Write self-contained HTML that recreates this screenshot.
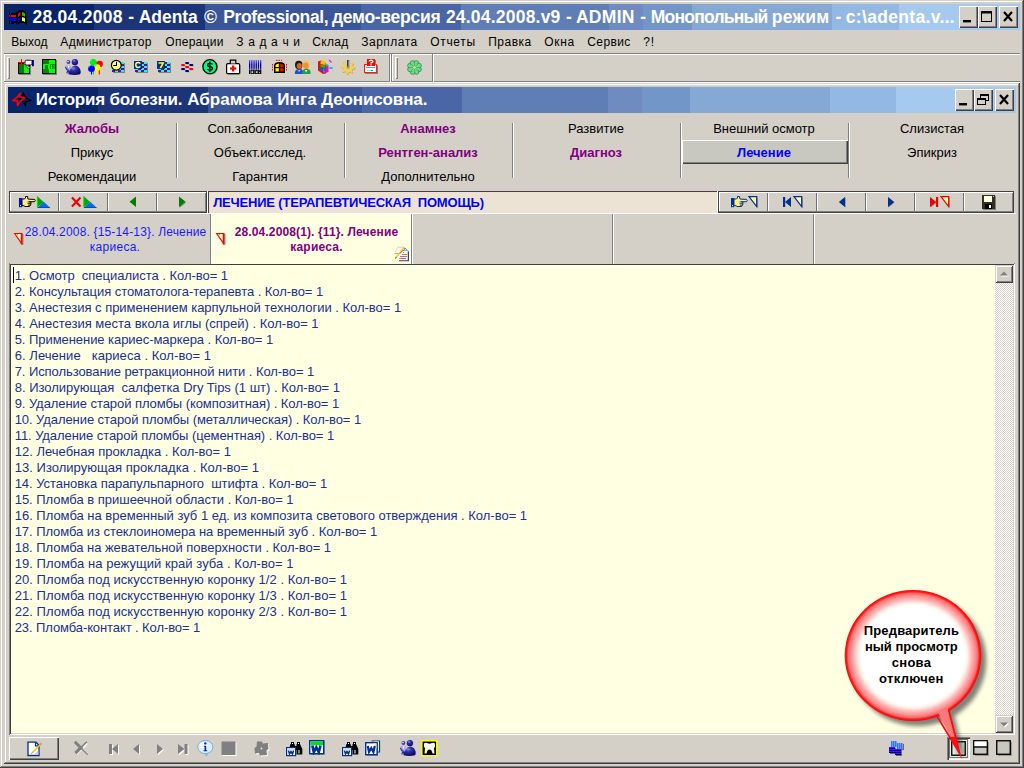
<!DOCTYPE html>
  <html><head><meta charset="utf-8"><title>Adenta</title>
  <style>
  html,body{margin:0;padding:0;}
  body{width:1024px;height:768px;overflow:hidden;background:#d4d0c8;position:relative;font-family:"Liberation Sans",sans-serif;}
  div,svg{position:absolute;}
  div{box-sizing:border-box;}
  </style></head><body>
  <div style="left:0px;top:0px;width:1024px;height:1px;background:#d4d0c8;"></div>
<div style="left:1px;top:1px;width:1022px;height:1px;background:#fff;"></div>
<div style="left:1px;top:1px;width:1px;height:766px;background:#fff;"></div>
<div style="left:1023px;top:0px;width:1px;height:768px;background:#404040;"></div>
<div style="left:0px;top:767px;width:1024px;height:1px;background:#404040;"></div>
<div style="left:1022px;top:1px;width:1px;height:766px;background:#808080;"></div>
<div style="left:1px;top:766px;width:1022px;height:1px;background:#808080;"></div>
<div style="left:4px;top:4px;width:1016px;height:26px;background:linear-gradient(to right,#0a246a 0.00%, #0a246a 8.90%,#1c3478 8.90%, #1c3478 19.80%,#3a5598 19.80%, #3a5598 35.10%,#4a66a6 35.10%, #4a66a6 45.00%,#607eb6 45.00%, #607eb6 59.50%,#6f8bc0 59.50%, #6f8bc0 62.90%,#7296c8 62.90%, #7296c8 67.70%,#86a8d4 67.70%, #86a8d4 81.50%,#94b8e4 81.50%, #94b8e4 88.10%,#a6c9f0 88.10%, #a6c9f0 100.00%);"></div>
<svg style="left:7px;top:9px" width="22" height="18" viewBox="0 0 22 18"><g shape-rendering="crispEdges">
<rect x="2" y="3" width="1" height="12" fill="#000"/>
<rect x="4" y="4" width="6" height="2" fill="#000"/><rect x="2" y="6" width="1" height="2" fill="#f00"/><rect x="4" y="6" width="5" height="2" fill="#f00"/>
<rect x="2" y="9" width="1" height="2" fill="#00f"/><rect x="4" y="9" width="5" height="3" fill="#00f"/><rect x="4" y="12" width="6" height="2" fill="#000"/>
<rect x="4" y="8" width="5" height="1" fill="#000"/><rect x="4" y="14" width="3" height="1" fill="#000"/></g>
<path d="M9 4 Q11 1 14 1 Q17 1 19 3 L20 15 L20 16 Q17 13 15 13.5 Q12 14 10 16 Z" fill="#000"/>
<path d="M11 5 Q12 3 13.5 3 L13.5 6.5 Q12 7 11 8 Z" fill="#f00"/>
<path d="M15 3 Q17 3 18 4.5 L18 8 Q17 6.8 15 6.8 Z" fill="#0c0"/>
<path d="M11 9.5 Q12 8.5 13.5 8.2 L13.5 11.5 Q12 12 11 13 Z" fill="#00f"/>
<path d="M15 8.2 Q17 8.2 18 9.5 L18 13 Q17 12 15 12 Z" fill="#ff0"/>
</svg>
<div style="left:32.42px;top:6px;font-size:17.5px;color:#fff;line-height:20.5px;white-space:pre;font-weight:bold;letter-spacing:0.281px;line-height:22px;">28.04.2008</div>
<div style="left:128.21px;top:6px;font-size:17.5px;color:#fff;line-height:20.5px;white-space:pre;font-weight:bold;line-height:22px;">-</div>
<div style="left:138.67px;top:6px;font-size:17.5px;color:#fff;line-height:20.5px;white-space:pre;font-weight:bold;letter-spacing:-0.026px;line-height:22px;">Adenta</div>
<div style="left:204.05px;top:6px;font-size:17.5px;color:#fff;line-height:20.5px;white-space:pre;font-weight:bold;line-height:22px;">©</div>
<div style="left:223.17px;top:6px;font-size:17.5px;color:#fff;line-height:20.5px;white-space:pre;font-weight:bold;letter-spacing:-0.366px;line-height:22px;">Professional,</div>
<div style="left:331.92px;top:6px;font-size:17.5px;color:#fff;line-height:20.5px;white-space:pre;font-weight:bold;letter-spacing:-0.281px;line-height:22px;">демо-версия</div>
<div style="left:445.92px;top:6px;font-size:17.5px;color:#fff;line-height:20.5px;white-space:pre;font-weight:bold;letter-spacing:0.21px;line-height:22px;">24.04.2008.v9</div>
<div style="left:565.96px;top:6px;font-size:17.5px;color:#fff;line-height:20.5px;white-space:pre;font-weight:bold;line-height:22px;">-</div>
<div style="left:575.92px;top:6px;font-size:17.5px;color:#fff;line-height:20.5px;white-space:pre;font-weight:bold;letter-spacing:0.309px;line-height:22px;">ADMIN</div>
<div style="left:640.21px;top:6px;font-size:17.5px;color:#fff;line-height:20.5px;white-space:pre;font-weight:bold;line-height:22px;">-</div>
<div style="left:650.82px;top:6px;font-size:17.5px;color:#fff;line-height:20.5px;white-space:pre;font-weight:bold;letter-spacing:-0.795px;line-height:22px;">Монопольный</div>
<div style="left:771.72px;top:6px;font-size:17.5px;color:#fff;line-height:20.5px;white-space:pre;font-weight:bold;letter-spacing:0.288px;line-height:22px;">режим</div>
<div style="left:835.49px;top:6px;font-size:17.5px;color:#fff;line-height:20.5px;white-space:pre;font-weight:bold;line-height:22px;">-</div>
<div style="left:845.82px;top:6px;font-size:17.5px;color:#fff;line-height:20.5px;white-space:pre;font-weight:bold;letter-spacing:0.324px;line-height:22px;">c:\adenta.v...</div>
<div style="left:959px;top:6px;width:19px;height:22px;background:#d4d0c8;box-shadow:inset 1px 1px 0 #fff, inset -1px -1px 0 #404040, inset -2px -2px 0 #808080;"><svg style="left:0;top:0" width="19" height="22" viewBox="0 0 19 22"><rect x="4" y="14" width="8" height="2.4" fill="#000"/></svg></div>
<div style="left:978px;top:6px;width:19px;height:22px;background:#d4d0c8;box-shadow:inset 1px 1px 0 #fff, inset -1px -1px 0 #404040, inset -2px -2px 0 #808080;"><svg style="left:0;top:0" width="19" height="22" viewBox="0 0 19 22"><rect x="3.5" y="5.5" width="10" height="10" fill="none" stroke="#000"/><rect x="3" y="5" width="11" height="2.5" fill="#000"/></svg></div>
<div style="left:999px;top:6px;width:19px;height:22px;background:#d4d0c8;box-shadow:inset 1px 1px 0 #fff, inset -1px -1px 0 #404040, inset -2px -2px 0 #808080;"><svg style="left:0;top:0" width="19" height="22" viewBox="0 0 19 22"><path d="M5 6 L13 15 M13 6 L5 15" stroke="#000" stroke-width="2.2" fill="none"/></svg></div>
<div style="left:11.26px;top:34px;font-size:12px;color:#000;line-height:15px;white-space:pre;letter-spacing:0.114px;line-height:16px;">Выход</div>
<div style="left:60.26px;top:34px;font-size:12px;color:#000;line-height:15px;white-space:pre;letter-spacing:0.377px;line-height:16px;">Администратор</div>
<div style="left:165.26px;top:34px;font-size:12px;color:#000;line-height:15px;white-space:pre;letter-spacing:0.292px;line-height:16px;">Операции</div>
<div style="left:236.26px;top:34px;font-size:12px;color:#000;line-height:15px;white-space:pre;letter-spacing:0.658px;line-height:16px;">З а д а ч и</div>
<div style="left:312.26px;top:34px;font-size:12px;color:#000;line-height:15px;white-space:pre;letter-spacing:0.349px;line-height:16px;">Склад</div>
<div style="left:361.26px;top:34px;font-size:12px;color:#000;line-height:15px;white-space:pre;letter-spacing:0.491px;line-height:16px;">Зарплата</div>
<div style="left:430.26px;top:34px;font-size:12px;color:#000;line-height:15px;white-space:pre;letter-spacing:0.665px;line-height:16px;">Отчеты</div>
<div style="left:488.26px;top:34px;font-size:12px;color:#000;line-height:15px;white-space:pre;letter-spacing:0.488px;line-height:16px;">Правка</div>
<div style="left:544.26px;top:34px;font-size:12px;color:#000;line-height:15px;white-space:pre;letter-spacing:0.647px;line-height:16px;">Окна</div>
<div style="left:587.26px;top:34px;font-size:12px;color:#000;line-height:15px;white-space:pre;letter-spacing:0.397px;line-height:16px;">Сервис</div>
<div style="left:643.26px;top:34px;font-size:12px;color:#000;line-height:15px;white-space:pre;letter-spacing:0.731px;line-height:16px;">?!</div>
<div style="left:4px;top:53px;width:1016px;height:1px;background:#808080;"></div>
<div style="left:4px;top:54px;width:1016px;height:1px;background:#fff;"></div>
<div style="left:4px;top:81px;width:1016px;height:1px;background:#808080;"></div>
<div style="left:4px;top:82px;width:1016px;height:1px;background:#fff;"></div>
<div style="left:4px;top:54px;width:1px;height:27px;background:#fff;"></div>
<div style="left:389px;top:54px;width:1px;height:27px;background:#808080;"></div>
<div style="left:390px;top:54px;width:1px;height:28px;background:#fff;"></div>
<div style="left:391px;top:54px;width:1px;height:27px;background:#808080;"></div>
<div style="left:392px;top:55px;width:1px;height:26px;background:#fff;"></div>
<div style="left:432px;top:54px;width:1px;height:27px;background:#808080;"></div>
<div style="left:433px;top:54px;width:1px;height:28px;background:#fff;"></div>
<div style="left:7px;top:57px;width:3px;height:22px;background:#d4d0c8;box-shadow:inset 1px 1px 0 #fff, inset -1px -1px 0 #808080;"></div>
<div style="left:395px;top:57px;width:3px;height:22px;background:#d4d0c8;box-shadow:inset 1px 1px 0 #fff, inset -1px -1px 0 #808080;"></div>
<svg style="left:18px;top:59px" width="17" height="16" viewBox="0 0 17 16"><g shape-rendering="crispEdges"><rect x="1" y="5" width="12" height="11" fill="#808080"/><rect x="0" y="4" width="12" height="11" fill="#000"/><rect x="1" y="5" width="5" height="9" fill="#008000"/><rect x="6" y="5" width="5" height="9" fill="#00ff00"/></g>
<path d="M5.6 4.6 L7.6 3 L12 8.2 L10.4 10 Z" fill="#fff" stroke="#000" stroke-width="0.5"/><path d="M6.6 4.6 L10.6 9.2 M7.6 3.8 L11.4 8.4 M6.4 5.6 L8.4 3.6 M7.8 7 L9.8 5 M9.2 8.6 L11.2 6.6" stroke="#404040" stroke-width="0.6"/>
<rect x="7" y="1.2" width="7" height="4.8" rx="1.6" fill="#fff" stroke="#000" stroke-width="0.9"/>
<rect x="14" y="1" width="1.9" height="6.2" fill="#000080"/>
<g shape-rendering="crispEdges"><rect x="3" y="0" width="1" height="7" fill="#f00"/><rect x="0" y="3" width="7" height="1" fill="#f00"/></g></svg>
<svg style="left:41px;top:59px" width="16" height="16" viewBox="0 0 16 16"><g shape-rendering="crispEdges"><rect x="2" y="1" width="14" height="15" fill="#808080"/><rect x="1" y="0" width="14" height="15" fill="#000"/><rect x="2" y="1" width="12" height="13" fill="#008000"/>
<rect x="8" y="1" width="6" height="4" fill="#00ff00"/><rect x="8" y="10" width="6" height="4" fill="#00ff00"/><rect x="2" y="10" width="6" height="4" fill="#009000"/>
<rect x="2" y="5" width="7" height="5" fill="#00ff00"/><rect x="4" y="6" width="3" height="4" fill="#008000"/>
<rect x="9" y="5" width="5" height="1" fill="#00a000"/><rect x="10" y="6" width="1" height="4" fill="#00ff00"/><rect x="12" y="6" width="2" height="4" fill="#00c000"/></g></svg>
<svg style="left:64px;top:59px" width="17" height="16" viewBox="0 0 17 16"><defs><radialGradient id="pga" cx="0.38" cy="0.3" r="0.75"><stop offset="0" stop-color="#8c8ce6"/><stop offset="0.35" stop-color="#3030a8"/><stop offset="1" stop-color="#06065c"/></radialGradient></defs>
<path d="M1 8 Q1.5 5.6 4.4 5.6 Q6.6 5.6 7.4 8 L6.6 11.5 L5.6 14.4 L3 14.4 L2.6 11 Z" fill="#a8a8ec"/><path d="M3.6 6.6 L4.6 9.6 L5.6 6.6 Z" fill="#fff"/><path d="M1.4 8 L3 11 M2.8 14.4 L4 11 L5.4 14.4" stroke="#2828a0" stroke-width="1.1" fill="none"/>
<circle cx="4.4" cy="3" r="1.9" fill="#3434b0"/><circle cx="4" cy="2.6" r="0.8" fill="#fff"/>
<circle cx="10.9" cy="3.1" r="3.2" fill="url(#pga)"/><path d="M4.6 15.2 Q4.4 12 7 9.6 Q8.4 6.5 11 6.5 Q14.4 6.5 16 10 Q17.4 13.2 16 15.2 Q10.5 16.6 4.6 15.2 Z" fill="url(#pga)"/></svg>
<svg style="left:87px;top:59px" width="16" height="16" viewBox="0 0 16 16"><path d="M6.3 6 L6.3 15.5" stroke="#00e000" stroke-width="1.1"/><path d="M4.5 12.5 L4.5 15.5" stroke="#0000ff" stroke-width="1.1"/><path d="M10 11.5 L10 15.5" stroke="#ffff00" stroke-width="1.1"/><path d="M12.3 8 L12.3 15.5" stroke="#ff0000" stroke-width="1.1"/>
<ellipse cx="6.3" cy="3.3" rx="3.4" ry="3.4" fill="#00f400"/><ellipse cx="12.6" cy="5" rx="3.3" ry="3.2" fill="#ff0000"/><ellipse cx="10.4" cy="8.6" rx="3" ry="3.4" fill="#ffff00"/><ellipse cx="4.5" cy="9.8" rx="3.4" ry="3.2" fill="#0000ff"/><circle cx="8.4" cy="6.4" r="1.1" fill="#00ffff"/><circle cx="3.8" cy="1.6" r="0.8" fill="#00ffff"/><path d="M1.6 8.6 L3 7.4" stroke="#80c0ff" stroke-width="0.8"/></svg>
<svg style="left:110px;top:59px" width="16" height="16" viewBox="0 0 16 16"><g shape-rendering="crispEdges"><rect x="2" y="3" width="3" height="2" fill="#800080"/><rect x="5" y="3" width="3" height="2" fill="#00ffff"/><rect x="8" y="3" width="3" height="2" fill="#800080"/><rect x="11" y="3" width="3" height="2" fill="#00ffff"/><rect x="2" y="5" width="3" height="2" fill="#00ffff"/><rect x="5" y="5" width="3" height="2" fill="#800080"/><rect x="8" y="5" width="3" height="2" fill="#00ffff"/><rect x="11" y="5" width="3" height="2" fill="#800080"/><rect x="2" y="7" width="3" height="2" fill="#800080"/><rect x="5" y="7" width="3" height="2" fill="#00ffff"/><rect x="8" y="7" width="3" height="2" fill="#800080"/><rect x="11" y="7" width="3" height="2" fill="#00ffff"/><rect x="2" y="9" width="3" height="2" fill="#00ffff"/><rect x="5" y="9" width="3" height="2" fill="#800080"/><rect x="8" y="9" width="3" height="2" fill="#00ffff"/><rect x="11" y="9" width="3" height="2" fill="#800080"/><rect x="2" y="11" width="3" height="2" fill="#800080"/><rect x="5" y="11" width="3" height="2" fill="#00ffff"/><rect x="8" y="11" width="3" height="2" fill="#800080"/><rect x="11" y="11" width="3" height="2" fill="#00ffff"/></g><rect x="14" y="4" width="1" height="10" fill="#808080"/><rect x="3" y="13" width="12" height="1" fill="#808080"/><circle cx="6.3" cy="6.2" r="4.9" fill="#ffff80" stroke="#000" stroke-width="1.2"/><path d="M6.5 2.8 L6.5 6.5 L3.3 6.5" stroke="#000" stroke-width="1.1" fill="none"/></svg>
<svg style="left:133px;top:59px" width="16" height="16" viewBox="0 0 16 16"><g shape-rendering="crispEdges"><rect x="2" y="3" width="3" height="2" fill="#800080"/><rect x="5" y="3" width="3" height="2" fill="#00ffff"/><rect x="8" y="3" width="3" height="2" fill="#800080"/><rect x="11" y="3" width="3" height="2" fill="#00ffff"/><rect x="2" y="5" width="3" height="2" fill="#00ffff"/><rect x="5" y="5" width="3" height="2" fill="#800080"/><rect x="8" y="5" width="3" height="2" fill="#00ffff"/><rect x="11" y="5" width="3" height="2" fill="#800080"/><rect x="2" y="7" width="3" height="2" fill="#800080"/><rect x="5" y="7" width="3" height="2" fill="#00ffff"/><rect x="8" y="7" width="3" height="2" fill="#800080"/><rect x="11" y="7" width="3" height="2" fill="#00ffff"/><rect x="2" y="9" width="3" height="2" fill="#00ffff"/><rect x="5" y="9" width="3" height="2" fill="#800080"/><rect x="8" y="9" width="3" height="2" fill="#00ffff"/><rect x="11" y="9" width="3" height="2" fill="#800080"/><rect x="2" y="11" width="3" height="2" fill="#800080"/><rect x="5" y="11" width="3" height="2" fill="#00ffff"/><rect x="8" y="11" width="3" height="2" fill="#800080"/><rect x="11" y="11" width="3" height="2" fill="#00ffff"/></g><rect x="14" y="4" width="1" height="10" fill="#808080"/><rect x="3" y="13" width="12" height="1" fill="#808080"/><rect x="1" y="2" width="8" height="8" fill="#003090" shape-rendering="crispEdges"/><path d="M7.3 4.6 Q6.5 3.6 5 3.6 Q2.8 3.6 2.8 6 Q2.8 8.4 5 8.4 Q6.5 8.4 7.3 7.4" fill="none" stroke="#ffff60" stroke-width="1.5"/></svg>
<svg style="left:156px;top:59px" width="16" height="16" viewBox="0 0 16 16"><g shape-rendering="crispEdges"><rect x="2" y="3" width="3" height="2" fill="#800080"/><rect x="5" y="3" width="3" height="2" fill="#00ffff"/><rect x="8" y="3" width="3" height="2" fill="#800080"/><rect x="11" y="3" width="3" height="2" fill="#00ffff"/><rect x="2" y="5" width="3" height="2" fill="#00ffff"/><rect x="5" y="5" width="3" height="2" fill="#800080"/><rect x="8" y="5" width="3" height="2" fill="#00ffff"/><rect x="11" y="5" width="3" height="2" fill="#800080"/><rect x="2" y="7" width="3" height="2" fill="#800080"/><rect x="5" y="7" width="3" height="2" fill="#00ffff"/><rect x="8" y="7" width="3" height="2" fill="#800080"/><rect x="11" y="7" width="3" height="2" fill="#00ffff"/><rect x="2" y="9" width="3" height="2" fill="#00ffff"/><rect x="5" y="9" width="3" height="2" fill="#800080"/><rect x="8" y="9" width="3" height="2" fill="#00ffff"/><rect x="11" y="9" width="3" height="2" fill="#800080"/><rect x="2" y="11" width="3" height="2" fill="#800080"/><rect x="5" y="11" width="3" height="2" fill="#00ffff"/><rect x="8" y="11" width="3" height="2" fill="#800080"/><rect x="11" y="11" width="3" height="2" fill="#00ffff"/></g><rect x="14" y="4" width="1" height="10" fill="#808080"/><rect x="3" y="13" width="12" height="1" fill="#808080"/><rect x="1" y="2" width="8" height="8" fill="#003090" shape-rendering="crispEdges"/><path d="M2.5 4 L7.2 4 L4.5 9" fill="none" stroke="#ffff00" stroke-width="1.6"/></svg>
<svg style="left:179px;top:59px" width="16" height="16" viewBox="0 0 16 16"><rect x="6.8999999999999995" y="4.3" width="3.6" height="1" fill="#808080" opacity="0.7"/><rect x="6.3" y="3" width="3.7" height="1.9" rx="0.4" fill="#000080"/><rect x="2.8000000000000003" y="6.3" width="3.6" height="1" fill="#808080" opacity="0.7"/><rect x="2.2" y="5" width="3.7" height="1.9" rx="0.4" fill="#ff0000"/><rect x="11.0" y="6.3" width="3.6" height="1" fill="#808080" opacity="0.7"/><rect x="10.4" y="5" width="3.7" height="1.9" rx="0.4" fill="#000080"/><rect x="6.8999999999999995" y="8.3" width="3.6" height="1" fill="#808080" opacity="0.7"/><rect x="6.3" y="7" width="3.7" height="1.9" rx="0.4" fill="#ff0000"/><rect x="2.8000000000000003" y="10.3" width="3.6" height="1" fill="#808080" opacity="0.7"/><rect x="2.2" y="9" width="3.7" height="1.9" rx="0.4" fill="#000080"/><rect x="11.0" y="10.3" width="3.6" height="1" fill="#808080" opacity="0.7"/><rect x="10.4" y="9" width="3.7" height="1.9" rx="0.4" fill="#ff0000"/><rect x="6.8999999999999995" y="12.3" width="3.6" height="1" fill="#808080" opacity="0.7"/><rect x="6.3" y="11" width="3.7" height="1.9" rx="0.4" fill="#000080"/></svg>
<svg style="left:202px;top:59px" width="17" height="17" viewBox="0 0 17 17"><circle cx="8.5" cy="8.5" r="7.3" fill="#808080"/><circle cx="7.9" cy="7.7" r="7" fill="#00ff80" stroke="#000" stroke-width="1.3"/>
<path d="M10.5 5.5 Q10 4.3 8 4.3 Q5.6 4.3 5.6 6 Q5.6 7.6 8 7.7 Q10.4 7.9 10.4 9.5 Q10.4 11.2 8 11.2 Q5.8 11.2 5.4 10" fill="none" stroke="#000" stroke-width="1.3"/><path d="M7.9 2.6 L7.9 13" stroke="#000" stroke-width="1.3"/></svg>
<svg style="left:225px;top:59px" width="17" height="16" viewBox="0 0 17 16"><rect x="2.5" y="5.5" width="13" height="10" rx="1" fill="#808080"/><rect x="1.6" y="4.6" width="13" height="10" rx="1.2" fill="#fff" stroke="#000" stroke-width="1.2"/><path d="M5.3 4.5 L5.3 1.2 L10.8 1.2 L10.8 4.5" fill="#d4d0c8" stroke="#000" stroke-width="1.2"/>
<rect x="7" y="6.5" width="2.2" height="6" fill="#f00"/><rect x="5" y="8.4" width="6.2" height="2.2" fill="#f00"/></svg>
<svg style="left:248px;top:59px" width="16" height="16" viewBox="0 0 16 16"><defs><linearGradient id="bc" x1="0" y1="0" x2="0" y2="1"><stop offset="0" stop-color="#6060ff"/><stop offset="0.45" stop-color="#0000c0"/><stop offset="0.7" stop-color="#000080"/><stop offset="1" stop-color="#4040e0"/></linearGradient></defs><rect x="1" y="1" width="1.3" height="10" fill="url(#bc)"/><rect x="1" y="11" width="1.3" height="4" fill="#000"/><rect x="3.2" y="1" width="1.3" height="10" fill="url(#bc)"/><rect x="3.2" y="11" width="1.3" height="4" fill="#000"/><rect x="5.4" y="1" width="1.3" height="10" fill="url(#bc)"/><rect x="5.4" y="11" width="1.3" height="4" fill="#000"/><rect x="7.6" y="1" width="1.3" height="10" fill="url(#bc)"/><rect x="7.6" y="11" width="1.3" height="4" fill="#000"/><rect x="9.8" y="1" width="1.3" height="10" fill="url(#bc)"/><rect x="9.8" y="11" width="1.3" height="4" fill="#000"/><rect x="12" y="1" width="1.3" height="10" fill="url(#bc)"/><rect x="12" y="11" width="1.3" height="4" fill="#000"/><rect x="3" y="11.8" width="2.6" height="2.6" fill="#d4d0c8" stroke="#000" stroke-width="0.8"/><rect x="7.4" y="11.8" width="2.6" height="2.6" fill="#d4d0c8" stroke="#000" stroke-width="0.8"/><rect x="10.6" y="11.8" width="1.6" height="2.6" fill="#d4d0c8" stroke="#000" stroke-width="0.8"/></svg>
<svg style="left:271px;top:59px" width="17" height="16" viewBox="0 0 17 16"><path d="M5 1.3 L11 1.3" stroke="#f00" stroke-width="1" stroke-dasharray="1.5 1"/><path d="M1.5 5 L1.5 12" stroke="#f00" stroke-width="1" stroke-dasharray="1.5 1"/><path d="M15.5 5 L15.5 12" stroke="#f00" stroke-width="1" stroke-dasharray="1.5 1"/>
<path d="M3 14 L3 6.5 Q3 3 8.5 3 Q14 3 14 6.5 L14 14 Z" fill="#000"/>
<path d="M4.5 8 L4.5 6.5 Q4.8 4.6 7.8 4.4 L7.8 8 Z" fill="#ffff00"/><path d="M9.2 4.4 Q12.2 4.6 12.5 6.5 L12.5 8 L9.2 8 Z" fill="#ff0000"/><rect x="4.5" y="9.2" width="3.3" height="3.3" fill="#ffff00"/><rect x="9.2" y="9.2" width="3.3" height="3.3" fill="#ff0000"/></svg>
<svg style="left:294px;top:59px" width="17" height="16" viewBox="0 0 17 16"><path d="M0.8 15 Q0.5 10.5 4.5 10 L7 10 Q9.5 10.5 9 15 Z" fill="#2050d0"/><path d="M8 15 Q8 10.5 11 10 L14 10 Q17 10.5 16.5 15 Z" fill="#20a040"/>
<ellipse cx="4.8" cy="6" rx="3.8" ry="4.2" fill="#181818"/><ellipse cx="5.3" cy="7" rx="2.6" ry="3" fill="#d06820"/>
<ellipse cx="12" cy="5.8" rx="3.6" ry="4" fill="#f0c060"/><ellipse cx="12" cy="6.8" rx="2.7" ry="3.1" fill="#f09030"/><path d="M4 11 L5 13 L6.5 11 Z" fill="#c0d8ff"/><path d="M11 11 L12 13.5 L13.5 11 Z" fill="#fff"/></svg>
<svg style="left:317px;top:59px" width="17" height="16" viewBox="0 0 17 16"><path d="M1 2.5 L4 1.5 L9 4 L9 14.5 L6 15 L1 11.5 Z" fill="#e01010"/><path d="M3.5 2.5 L6.5 1.2 L8.5 2.2 L8.5 6 L3.5 5 Z" fill="#ffc000"/><path d="M3.5 5.5 L8 6.5 L8 9 L3.5 8 Z" fill="#00d000"/><path d="M3.5 8.5 L8 9.5 L8 13 L3.5 11.5 Z" fill="#0060e0"/>
<path d="M8.5 7 L11.5 6 L11.5 13 L8.5 14 Z" fill="#f000f0"/><path d="M8 5.5 L10.5 5 L11.5 6.5 L9 7.5 Z" fill="#00d080"/><ellipse cx="14" cy="9" rx="2.2" ry="1" fill="#20b0f0"/><path d="M12 1 L14.5 3.5" stroke="#f020d0" stroke-width="1.2"/><path d="M6 9 L8 13 L6.5 14" fill="#20b0f0"/></svg>
<svg style="left:340px;top:59px" width="17" height="16" viewBox="0 0 17 16"><polygon points="15.50,8.80 15.36,10.20 12.92,10.71 12.46,11.58 13.39,13.89 12.30,14.79 10.21,13.42 9.28,13.70 8.30,16.00 6.90,15.86 6.39,13.42 5.52,12.96 3.21,13.89 2.31,12.80 3.68,10.71 3.40,9.78 1.10,8.80 1.24,7.40 3.68,6.89 4.14,6.02 3.21,3.71 4.30,2.81 6.39,4.18 7.32,3.90 8.30,1.60 9.70,1.74 10.21,4.18 11.08,4.64 13.39,3.71 14.29,4.80 12.92,6.89 13.20,7.82" fill="#c89830"/><polygon points="15.00,8.40 14.87,9.77 12.43,10.24 11.99,11.07 12.95,13.35 11.89,14.22 9.84,12.83 8.94,13.11 8.00,15.40 6.63,15.27 6.16,12.83 5.33,12.39 3.05,13.35 2.18,12.29 3.57,10.24 3.29,9.34 1.00,8.40 1.13,7.03 3.57,6.56 4.01,5.73 3.05,3.45 4.11,2.58 6.16,3.97 7.06,3.69 8.00,1.40 9.37,1.53 9.84,3.97 10.67,4.41 12.95,3.45 13.82,4.51 12.43,6.56 12.71,7.46" fill="#f0d060"/><circle cx="8" cy="8.4" r="1.6" fill="#c8a040"/><rect x="7" y="1" width="2.6" height="6.5" fill="#203878"/><rect x="8.6" y="1.3" width="1" height="6" fill="#e8e8f0"/></svg>
<svg style="left:363px;top:59px" width="16" height="16" viewBox="0 0 16 16"><g shape-rendering="crispEdges"><rect x="2" y="6" width="13" height="9" fill="#808080"/><rect x="1" y="5" width="13" height="9" fill="#ff2000"/><rect x="2" y="6" width="11" height="7" fill="#fff"/><rect x="3" y="8" width="9" height="1" fill="#8890a0"/><rect x="4" y="10.5" width="4" height="1" fill="#b0d0f0"/><rect x="8" y="10.5" width="2" height="1" fill="#0080ff"/>
<rect x="4" y="0" width="8" height="7" fill="#ff0000"/><rect x="12" y="1" width="1" height="5" fill="#808080"/></g><path d="M6.2 2.6 Q6.2 1.2 8 1.2 Q9.9 1.2 9.9 2.5 Q9.9 3.5 8 4 L8 4.6" fill="none" stroke="#fff" stroke-width="1.4"/><rect x="7.3" y="5.2" width="1.4" height="1.3" fill="#fff"/></svg>
<svg style="left:407px;top:60px" width="15" height="15" viewBox="0 0 15 15"><circle cx="11.84" cy="9.30" r="2.5" fill="#74d88c" stroke="#2f9a55" stroke-width="0.9"/><circle cx="9.30" cy="11.84" r="2.5" fill="#74d88c" stroke="#2f9a55" stroke-width="0.9"/><circle cx="5.70" cy="11.84" r="2.5" fill="#74d88c" stroke="#2f9a55" stroke-width="0.9"/><circle cx="3.16" cy="9.30" r="2.5" fill="#74d88c" stroke="#2f9a55" stroke-width="0.9"/><circle cx="3.16" cy="5.70" r="2.5" fill="#74d88c" stroke="#2f9a55" stroke-width="0.9"/><circle cx="5.70" cy="3.16" r="2.5" fill="#74d88c" stroke="#2f9a55" stroke-width="0.9"/><circle cx="9.30" cy="3.16" r="2.5" fill="#74d88c" stroke="#2f9a55" stroke-width="0.9"/><circle cx="11.84" cy="5.70" r="2.5" fill="#74d88c" stroke="#2f9a55" stroke-width="0.9"/><circle cx="7.5" cy="7.5" r="4.8" fill="#74d88c"/><path d="M7.5 7.5 L13.10 7.50" stroke="#3aa560" stroke-width="0.7"/><path d="M7.5 7.5 L11.46 11.46" stroke="#3aa560" stroke-width="0.7"/><path d="M7.5 7.5 L7.50 13.10" stroke="#3aa560" stroke-width="0.7"/><path d="M7.5 7.5 L3.54 11.46" stroke="#3aa560" stroke-width="0.7"/><path d="M7.5 7.5 L1.90 7.50" stroke="#3aa560" stroke-width="0.7"/><path d="M7.5 7.5 L3.54 3.54" stroke="#3aa560" stroke-width="0.7"/><path d="M7.5 7.5 L7.50 1.90" stroke="#3aa560" stroke-width="0.7"/><path d="M7.5 7.5 L11.46 3.54" stroke="#3aa560" stroke-width="0.7"/><circle cx="7.5" cy="7.5" r="1.3" fill="#f4e468"/></svg>
<div style="left:5px;top:84px;width:1px;height:679px;background:#fff;"></div>
<div style="left:5px;top:84px;width:1013px;height:1px;background:#fff;"></div>
<div style="left:1018px;top:84px;width:1px;height:679px;background:#808080;"></div>
<div style="left:1019px;top:83px;width:1px;height:681px;background:#404040;"></div>
<div style="left:5px;top:762px;width:1014px;height:1px;background:#808080;"></div>
<div style="left:4px;top:763px;width:1016px;height:1px;background:#404040;"></div>
<div style="left:8px;top:87px;width:1008px;height:26px;background:linear-gradient(to right,#0a246a 0.00%, #0a246a 8.90%,#1c3478 8.90%, #1c3478 19.80%,#3a5598 19.80%, #3a5598 35.10%,#4a66a6 35.10%, #4a66a6 45.00%,#607eb6 45.00%, #607eb6 59.50%,#6f8bc0 59.50%, #6f8bc0 62.90%,#7296c8 62.90%, #7296c8 67.70%,#86a8d4 67.70%, #86a8d4 81.50%,#94b8e4 81.50%, #94b8e4 88.10%,#a6c9f0 88.10%, #a6c9f0 100.00%);"></div>
<svg style="left:12px;top:92px" width="20" height="15" viewBox="0 0 20 15"><path d="M11.5 1.5 L13.5 5.5 L18.5 8.5 L14 9.5 L13.5 13.5 L11.5 10 L7.5 6.5 L10 5.5 Z" fill="none" stroke="#000" stroke-width="1.3"/>
<path d="M8.5 1 L7 4.5 L12.5 6 L7.5 10 L5.5 14 L5.5 9 L1 8.5 L5 5.5 Z" fill="none" stroke="#f00" stroke-width="1.6"/></svg>
<div style="left:35.75px;top:89px;font-size:17px;color:#fff;line-height:20px;white-space:pre;font-weight:bold;letter-spacing:-0.261px;line-height:22px;">История</div>
<div style="left:109.45px;top:89px;font-size:17px;color:#fff;line-height:20px;white-space:pre;font-weight:bold;letter-spacing:-0.175px;line-height:22px;">болезни.</div>
<div style="left:187.2px;top:89px;font-size:17px;color:#fff;line-height:20px;white-space:pre;font-weight:bold;letter-spacing:0.035px;line-height:22px;">Абрамова</div>
<div style="left:277.2px;top:89px;font-size:17px;color:#fff;line-height:20px;white-space:pre;font-weight:bold;letter-spacing:0.14px;line-height:22px;">Инга</div>
<div style="left:320.95px;top:89px;font-size:17px;color:#fff;line-height:20px;white-space:pre;font-weight:bold;letter-spacing:-0.117px;line-height:22px;">Деонисовна.</div>
<div style="left:955px;top:89px;width:19px;height:22px;background:#d4d0c8;box-shadow:inset 1px 1px 0 #fff, inset -1px -1px 0 #404040, inset -2px -2px 0 #808080;"><svg style="left:0;top:0" width="19" height="22" viewBox="0 0 19 22"><rect x="4" y="14" width="8" height="2.4" fill="#000"/></svg></div>
<div style="left:974px;top:89px;width:19px;height:22px;background:#d4d0c8;box-shadow:inset 1px 1px 0 #fff, inset -1px -1px 0 #404040, inset -2px -2px 0 #808080;"><svg style="left:0;top:0" width="19" height="22" viewBox="0 0 19 22"><rect x="6.5" y="5.5" width="8" height="6" fill="none" stroke="#000"/><rect x="6" y="5" width="9" height="2" fill="#000"/><rect x="3.5" y="9.5" width="8" height="6" fill="#d4d0c8" stroke="#000"/><rect x="3" y="9" width="9" height="2" fill="#000"/></svg></div>
<div style="left:995px;top:89px;width:19px;height:22px;background:#d4d0c8;box-shadow:inset 1px 1px 0 #fff, inset -1px -1px 0 #404040, inset -2px -2px 0 #808080;"><svg style="left:0;top:0" width="19" height="22" viewBox="0 0 19 22"><path d="M5 6 L13 15 M13 6 L5 15" stroke="#000" stroke-width="2.2" fill="none"/></svg></div>
<div style="left:682px;top:140px;width:166px;height:24px;background:#c8c8c0;box-shadow:inset 1px 1px 0 #fff, inset -1px -1px 0 #404040, inset -2px -2px 0 #808080;"></div>
<div style="left:8px;top:121px;font-size:13px;color:#800080;line-height:16px;white-space:pre;font-weight:bold;width:168px;text-align:center;line-height:16px;">Жалобы</div>
<div style="left:176px;top:121px;font-size:13px;color:#000;line-height:16px;white-space:pre;width:168px;text-align:center;line-height:16px;">Соп.заболевания</div>
<div style="left:344px;top:121px;font-size:13px;color:#800080;line-height:16px;white-space:pre;font-weight:bold;width:168px;text-align:center;line-height:16px;">Анамнез</div>
<div style="left:512px;top:121px;font-size:13px;color:#000;line-height:16px;white-space:pre;width:168px;text-align:center;line-height:16px;">Развитие</div>
<div style="left:680px;top:121px;font-size:13px;color:#000;line-height:16px;white-space:pre;width:168px;text-align:center;line-height:16px;">Внешний осмотр</div>
<div style="left:848px;top:121px;font-size:13px;color:#000;line-height:16px;white-space:pre;width:168px;text-align:center;line-height:16px;">Слизистая</div>
<div style="left:8px;top:145px;font-size:13px;color:#000;line-height:16px;white-space:pre;width:168px;text-align:center;line-height:16px;">Прикус</div>
<div style="left:176px;top:145px;font-size:13px;color:#000;line-height:16px;white-space:pre;width:168px;text-align:center;line-height:16px;">Объект.исслед.</div>
<div style="left:344px;top:145px;font-size:13px;color:#800080;line-height:16px;white-space:pre;font-weight:bold;width:168px;text-align:center;line-height:16px;">Рентген-анализ</div>
<div style="left:512px;top:145px;font-size:13px;color:#800080;line-height:16px;white-space:pre;font-weight:bold;width:168px;text-align:center;line-height:16px;">Диагноз</div>
<div style="left:680px;top:145px;font-size:13px;color:#0000ff;line-height:16px;white-space:pre;font-weight:bold;width:168px;text-align:center;line-height:16px;">Лечение</div>
<div style="left:848px;top:145px;font-size:13px;color:#000;line-height:16px;white-space:pre;width:168px;text-align:center;line-height:16px;">Эпикриз</div>
<div style="left:8px;top:169px;font-size:13px;color:#000;line-height:16px;white-space:pre;width:168px;text-align:center;line-height:16px;">Рекомендации</div>
<div style="left:176px;top:169px;font-size:13px;color:#000;line-height:16px;white-space:pre;width:168px;text-align:center;line-height:16px;">Гарантия</div>
<div style="left:344px;top:169px;font-size:13px;color:#000;line-height:16px;white-space:pre;width:168px;text-align:center;line-height:16px;">Дополнительно</div>
<div style="left:176px;top:123px;width:1px;height:55px;background:#808080;"></div>
<div style="left:177px;top:123px;width:1px;height:55px;background:#fff;"></div>
<div style="left:344px;top:123px;width:1px;height:55px;background:#808080;"></div>
<div style="left:345px;top:123px;width:1px;height:55px;background:#fff;"></div>
<div style="left:512px;top:123px;width:1px;height:55px;background:#808080;"></div>
<div style="left:513px;top:123px;width:1px;height:55px;background:#fff;"></div>
<div style="left:680px;top:123px;width:1px;height:55px;background:#808080;"></div>
<div style="left:681px;top:123px;width:1px;height:55px;background:#fff;"></div>
<div style="left:848px;top:123px;width:1px;height:55px;background:#808080;"></div>
<div style="left:849px;top:123px;width:1px;height:55px;background:#fff;"></div>
<div style="left:9px;top:191px;width:198px;height:22px;background:#d4d0c8;box-shadow:inset 1px 1px 0 #404040, inset -1px -1px 0 #404040, inset -2px -2px 0 #808080;"></div>
<div style="left:10px;top:192px;width:196px;height:1px;background:#fff;"></div>
<div style="left:10px;top:192px;width:1px;height:19px;background:#fff;"></div>
<div style="left:58px;top:193px;width:1px;height:18px;background:#707070;"></div>
<svg style="left:19px;top:196px" width="32" height="12" viewBox="0 0 32 12"><rect x="0" y="2" width="3.1" height="9.2" fill="#0000ff"/><rect x="1" y="9" width="1.1" height="1.1" fill="#ffee80"/><path d="M3 3 L5.5 3 L6.5 2 L6.5 0.4 L8.6 0.4 L8.8 2.8 L10 3.2 L15.6 3.4 L16.2 4.5 L15.6 5.7 L10.2 5.8 L12 6.2 L12.1 7.6 L11.5 7.8 L11.8 9 L11 9.8 L10.5 10.5 L6 10.5 L5 9.7 L3 9.7 Z" fill="#ffee80" stroke="#000" stroke-width="1"/><path d="M8.6 5.9 L10.4 5.9 M8.6 7.7 L11.6 7.7 M8.9 9.2 L11.2 9.2" stroke="#000" stroke-width="0.9"/><polygon points="18,0 18,11.6 24.6,5.9" fill="#00a400"/><path d="M18.4 0.6 L18.4 11" stroke="#00f000" stroke-width="0.9"/><polygon points="18.3,11.7 31.2,11.7 24.7,5.7" fill="#0070e8"/><path d="M18.5 11.5 L31 11.5" stroke="#0040a0" stroke-width="0.8"/></svg>
<div style="left:59px;top:192px;width:1px;height:19px;background:#fff;"></div>
<div style="left:107px;top:193px;width:1px;height:18px;background:#707070;"></div>
<svg style="left:70.6px;top:196px" width="26" height="12" viewBox="0 0 26 12"><path d="M1 1.5 L9.5 10.5 M9.5 1.5 L1 10.5" stroke="#f00000" stroke-width="2.2"/><polygon points="12.5,0 12.5,11.6 19.1,5.9" fill="#00a400"/><path d="M12.9 0.6 L12.9 11" stroke="#00f000" stroke-width="0.9"/><polygon points="12.8,11.7 25.7,11.7 19.2,5.7" fill="#0070e8"/><path d="M13.0 11.5 L25.5 11.5" stroke="#0040a0" stroke-width="0.8"/></svg>
<div style="left:108px;top:192px;width:1px;height:19px;background:#fff;"></div>
<div style="left:156px;top:193px;width:1px;height:18px;background:#707070;"></div>
<svg style="left:129px;top:196px" width="8" height="12" viewBox="0 0 8 12"><polygon points="7,0.5 7,11 0.5,5.8" fill="#008000"/></svg>
<div style="left:157px;top:192px;width:1px;height:19px;background:#fff;"></div>
<svg style="left:178px;top:196px" width="8" height="12" viewBox="0 0 8 12"><polygon points="1.6,1.2 1.6,11.7 8,6.4" fill="#808080"/><polygon points="1,0.5 1,11 7.5,5.8" fill="#008000"/></svg>
<div style="left:207px;top:191px;width:1px;height:22px;background:#fff;"></div>
<div style="left:208px;top:191px;width:509px;height:22px;background:#ece3d4;box-shadow:inset 1px 1px 0 #404040;"></div>
<div style="left:717px;top:191px;width:1px;height:22px;background:#fff;"></div>
<div style="left:8px;top:213px;width:1008px;height:1px;background:#fff;"></div>
<div style="left:213.2px;top:195px;font-size:13px;color:#0000ff;line-height:16px;white-space:pre;font-weight:bold;letter-spacing:-0.191px;line-height:16px;">ЛЕЧЕНИЕ (ТЕРАПЕВТИЧЕСКАЯ  ПОМОЩЬ)</div>
<div style="left:718px;top:191px;width:296px;height:22px;background:#d4d0c8;box-shadow:inset 1px 1px 0 #404040, inset -1px -1px 0 #404040, inset -2px -2px 0 #808080;"></div>
<div style="left:719px;top:192px;width:294px;height:1px;background:#fff;"></div>
<div style="left:719px;top:192px;width:1px;height:19px;background:#fff;"></div>
<div style="left:767px;top:193px;width:1px;height:18px;background:#707070;"></div>
<svg style="left:730.5px;top:196px" width="27" height="12" viewBox="0 0 27 12"><rect x="0" y="2" width="3.1" height="9.2" fill="#003090"/><rect x="1" y="9" width="1.1" height="1.1" fill="#ffee80"/><path d="M3 3 L5.5 3 L6.5 2 L6.5 0.4 L8.6 0.4 L8.8 2.8 L10 3.2 L15.6 3.4 L16.2 4.5 L15.6 5.7 L10.2 5.8 L12 6.2 L12.1 7.6 L11.5 7.8 L11.8 9 L11 9.8 L10.5 10.5 L6 10.5 L5 9.7 L3 9.7 Z" fill="#ffee80" stroke="#003090" stroke-width="1"/><path d="M8.6 5.9 L10.4 5.9 M8.6 7.7 L11.6 7.7 M8.9 9.2 L11.2 9.2" stroke="#003090" stroke-width="0.9"/><polygon points="18.7,1.4 26.7,1.4 26.7,11.4" fill="#808080"/><polygon points="18.0,0.7 25.7,0.7 25.7,10.6" fill="#ffffa0" stroke="#003090" stroke-width="1.2"/></svg>
<div style="left:768px;top:192px;width:1px;height:19px;background:#fff;"></div>
<div style="left:816px;top:193px;width:1px;height:18px;background:#707070;"></div>
<svg style="left:783px;top:196px" width="20" height="12" viewBox="0 0 20 12"><rect x="0" y="1" width="2.2" height="10" fill="#003090"/><polygon points="8,1 8,11 2,6" fill="#003090"/><polygon points="11.7,1.4 19.7,1.4 19.7,11.4" fill="#808080"/><polygon points="11.0,0.7 18.7,0.7 18.7,10.6" fill="#ffffa0" stroke="#003090" stroke-width="1.2"/></svg>
<div style="left:817px;top:192px;width:1px;height:19px;background:#fff;"></div>
<div style="left:865px;top:193px;width:1px;height:18px;background:#707070;"></div>
<svg style="left:838px;top:196px" width="8" height="12" viewBox="0 0 8 12"><polygon points="7.6,1.6 7.6,11.6 1.8,6.6" fill="#808080"/><polygon points="7,1 7,11 0.8,6" fill="#003090"/></svg>
<div style="left:866px;top:192px;width:1px;height:19px;background:#fff;"></div>
<div style="left:914px;top:193px;width:1px;height:18px;background:#707070;"></div>
<svg style="left:887px;top:196px" width="8" height="12" viewBox="0 0 8 12"><polygon points="1.6,1.6 1.6,11.6 7.6,6.6" fill="#808080"/><polygon points="1,1 1,11 7,6" fill="#003090"/></svg>
<div style="left:915px;top:192px;width:1px;height:19px;background:#fff;"></div>
<div style="left:963px;top:193px;width:1px;height:18px;background:#707070;"></div>
<svg style="left:930px;top:196px" width="20" height="12" viewBox="0 0 20 12"><polygon points="0.7,1.6 0.7,11.6 6.6,6.6" fill="#808080"/><polygon points="0,1 0,11 6,6" fill="#f00000"/><rect x="6" y="1" width="2.2" height="10" fill="#f00000"/><polygon points="11.7,1.4 19.7,1.4 19.7,11.4" fill="#808080"/><polygon points="11.0,0.7 18.7,0.7 18.7,10.6" fill="#ffffa0" stroke="#f00000" stroke-width="1.2"/></svg>
<div style="left:964px;top:192px;width:1px;height:19px;background:#fff;"></div>
<svg style="left:982px;top:195px" width="14" height="15" viewBox="0 0 14 15"><g shape-rendering="crispEdges"><rect x="1" y="1" width="13" height="14" fill="#808080"/><rect x="0" y="0" width="13" height="14" fill="#303020"/><rect x="2" y="1" width="8" height="6" fill="#ffffe0"/><rect x="3" y="9" width="7" height="5" fill="#000"/><rect x="7" y="10" width="2" height="3" fill="#fff"/><rect x="11" y="1" width="1" height="1" fill="#c0c0c0"/></g></svg>
<div style="left:212px;top:214px;width:199px;height:50px;background:#ffffe1;"></div>
<div style="left:210px;top:214px;width:1px;height:50px;background:#808080;"></div>
<div style="left:211px;top:214px;width:1px;height:50px;background:#fff;"></div>
<div style="left:411px;top:214px;width:1px;height:50px;background:#808080;"></div>
<div style="left:412px;top:214px;width:1px;height:50px;background:#fff;"></div>
<div style="left:612px;top:214px;width:1px;height:50px;background:#808080;"></div>
<div style="left:613px;top:214px;width:1px;height:50px;background:#fff;"></div>
<div style="left:813px;top:214px;width:1px;height:50px;background:#808080;"></div>
<div style="left:814px;top:214px;width:1px;height:50px;background:#fff;"></div>
<svg style="left:13px;top:232px" width="12" height="14" viewBox="0 0 12 14"><path d="M9.9 2 L9.9 12.8" stroke="#707070" stroke-width="0.9"/><polygon points="1.6,1.5 8.6,1.5 8.6,11.4" fill="#ffffc8" stroke="#ff0000" stroke-width="1.1"/><path d="M3.2 2.2 L5.4 2.2 L4.2 3.6 Z" fill="#70a000"/><path d="M8.6 1 L8.6 12.4" stroke="#ff0000" stroke-width="1.7"/></svg>
<svg style="left:215px;top:232px" width="12" height="14" viewBox="0 0 12 14"><path d="M9.9 2 L9.9 12.8" stroke="#707070" stroke-width="0.9"/><polygon points="1.6,1.5 8.6,1.5 8.6,11.4" fill="#ffffc8" stroke="#ff0000" stroke-width="1.1"/><path d="M3.2 2.2 L5.4 2.2 L4.2 3.6 Z" fill="#70a000"/><path d="M8.6 1 L8.6 12.4" stroke="#ff0000" stroke-width="1.7"/></svg>
<div style="left:24.76px;top:225px;font-size:12px;color:#1a1aff;line-height:15px;white-space:pre;letter-spacing:0.166px;line-height:15px;">28.04.2008. {15-14-13}. Лечение</div>
<div style="left:89.76px;top:240px;font-size:12px;color:#1a1aff;line-height:15px;white-space:pre;letter-spacing:0.278px;line-height:15px;">кариеса.</div>
<div style="left:234.66px;top:225px;font-size:12px;color:#800080;line-height:15px;white-space:pre;font-weight:bold;letter-spacing:0.134px;line-height:15px;">28.04.2008(1). {11}. Лечение</div>
<div style="left:290.26px;top:240px;font-size:12px;color:#800080;line-height:15px;white-space:pre;font-weight:bold;letter-spacing:0.218px;line-height:15px;">кариеса.</div>
<svg style="left:393.5px;top:245.3px" width="16" height="17" viewBox="0 0 16 17"><path d="M5 3.3 L11.2 3.3 L15 6.8 L15 16.2 L5 16.2 Z" fill="#2c4470"/><path d="M4 2.3 L10.3 2.3 L13.8 5.6 L13.8 15.2 L4 15.2 Z" fill="#f4faff"/><path d="M10.3 2.3 L10.3 5.6 L13.8 5.6 Z" fill="#3c5888"/><circle cx="11.6" cy="4.6" r="0.7" fill="#e8f0ff"/>
<g shape-rendering="crispEdges"><rect x="8" y="9" width="3" height="1" fill="#6090e0"/><rect x="10" y="9" width="3" height="1" fill="#ff6020"/><rect x="6" y="11" width="4" height="1" fill="#ff6020"/><rect x="10" y="11" width="3" height="1" fill="#6090e0"/><rect x="5" y="13" width="2" height="1" fill="#60c0d0"/><rect x="7" y="13" width="5" height="1" fill="#ff4040"/><rect x="9" y="5" width="1" height="1" fill="#ff6020"/><rect x="9" y="7" width="1" height="1" fill="#ff6020"/></g>
<path d="M1.2 7 L3.8 2.2 L10 2.2" fill="none" stroke="#d0c890" stroke-width="0.7"/><path d="M0.5 8.3 L4.5 8.6" stroke="#989060" stroke-width="0.8"/>
<path d="M2 12.6 L10.2 2.6" stroke="#ffc41c" stroke-width="1.5"/><path d="M6 8.6 L8.6 5.4" stroke="#604020" stroke-width="0.7"/><path d="M1.3 13.5 L2.3 12.2" stroke="#806020" stroke-width="1.2"/></svg>
<div style="left:9px;top:263px;width:1006px;height:472px;background:#ffffe1;box-shadow:inset 1px 1px 0 #808080, inset -1px -1px 0 #fff, inset 2px 2px 0 #404040, inset -2px -2px 0 #d4d0c8;"></div>
<div style="left:10px;top:263px;width:1004px;height:1px;background:#d4d0c8;"></div>
<div style="left:212px;top:263px;width:199px;height:1px;background:#ffffe1;"></div>
<div style="left:210px;top:263px;width:1px;height:1px;background:#808080;"></div>
<div style="left:211px;top:263px;width:1px;height:1px;background:#fff;"></div>
<div style="left:411px;top:263px;width:1px;height:1px;background:#808080;"></div>
<div style="left:412px;top:263px;width:1px;height:1px;background:#fff;"></div>
<div style="left:612px;top:263px;width:1px;height:1px;background:#808080;"></div>
<div style="left:613px;top:263px;width:1px;height:1px;background:#fff;"></div>
<div style="left:813px;top:263px;width:1px;height:1px;background:#808080;"></div>
<div style="left:814px;top:263px;width:1px;height:1px;background:#fff;"></div>
<div style="left:14.7px;top:268px;font-size:13px;color:#20309a;line-height:16px;white-space:pre;letter-spacing:-0.022px;line-height:16px;">1. Осмотр  специалиста . Кол-во= 1</div>
<div style="left:14.7px;top:284px;font-size:13px;color:#20309a;line-height:16px;white-space:pre;letter-spacing:-0.056px;line-height:16px;">2. Консультация стоматолога-терапевта . Кол-во= 1</div>
<div style="left:14.7px;top:300px;font-size:13px;color:#20309a;line-height:16px;white-space:pre;letter-spacing:-0.022px;line-height:16px;">3. Анестезия с применением карпульной технологии . Кол-во= 1</div>
<div style="left:14.7px;top:316px;font-size:13px;color:#20309a;line-height:16px;white-space:pre;letter-spacing:-0.001px;line-height:16px;">4. Анестезия места вкола иглы (спрей) . Кол-во= 1</div>
<div style="left:14.7px;top:332px;font-size:13px;color:#20309a;line-height:16px;white-space:pre;letter-spacing:-0.053px;line-height:16px;">5. Применение кариес-маркера . Кол-во= 1</div>
<div style="left:14.7px;top:348px;font-size:13px;color:#20309a;line-height:16px;white-space:pre;letter-spacing:0.055px;line-height:16px;">6. Лечение   кариеса . Кол-во= 1</div>
<div style="left:14.7px;top:364px;font-size:13px;color:#20309a;line-height:16px;white-space:pre;letter-spacing:-0.073px;line-height:16px;">7. Использование ретракционной нити . Кол-во= 1</div>
<div style="left:14.7px;top:380px;font-size:13px;color:#20309a;line-height:16px;white-space:pre;line-height:16px;">8. Изолирующая  салфетка Dry Tips (1 шт) . Кол-во= 1</div>
<div style="left:14.7px;top:396px;font-size:13px;color:#20309a;line-height:16px;white-space:pre;letter-spacing:-0.066px;line-height:16px;">9. Удаление старой пломбы (композитная) . Кол-во= 1</div>
<div style="left:14.7px;top:412px;font-size:13px;color:#20309a;line-height:16px;white-space:pre;letter-spacing:-0.071px;line-height:16px;">10. Удаление старой пломбы (металлическая) . Кол-во= 1</div>
<div style="left:14.7px;top:428px;font-size:13px;color:#20309a;line-height:16px;white-space:pre;letter-spacing:-0.064px;line-height:16px;">11. Удаление старой пломбы (цементная) . Кол-во= 1</div>
<div style="left:14.7px;top:444px;font-size:13px;color:#20309a;line-height:16px;white-space:pre;letter-spacing:0.011px;line-height:16px;">12. Лечебная прокладка . Кол-во= 1</div>
<div style="left:14.7px;top:460px;font-size:13px;color:#20309a;line-height:16px;white-space:pre;letter-spacing:0.033px;line-height:16px;">13. Изолирующая прокладка . Кол-во= 1</div>
<div style="left:14.7px;top:476px;font-size:13px;color:#20309a;line-height:16px;white-space:pre;letter-spacing:-0.047px;line-height:16px;">14. Установка парапульпарного  штифта . Кол-во= 1</div>
<div style="left:14.7px;top:492px;font-size:13px;color:#20309a;line-height:16px;white-space:pre;letter-spacing:-0.018px;line-height:16px;">15. Пломба в пришеечной области . Кол-во= 1</div>
<div style="left:14.7px;top:508px;font-size:13px;color:#20309a;line-height:16px;white-space:pre;letter-spacing:-0.008px;line-height:16px;">16. Пломба на временный зуб 1 ед. из композита светового отверждения . Кол-во= 1</div>
<div style="left:14.7px;top:524px;font-size:13px;color:#20309a;line-height:16px;white-space:pre;letter-spacing:-0.057px;line-height:16px;">17. Пломба из стеклоиномера на временный зуб . Кол-во= 1</div>
<div style="left:14.7px;top:540px;font-size:13px;color:#20309a;line-height:16px;white-space:pre;letter-spacing:-0.04px;line-height:16px;">18. Пломба на жевательной поверхности . Кол-во= 1</div>
<div style="left:14.7px;top:556px;font-size:13px;color:#20309a;line-height:16px;white-space:pre;letter-spacing:0.048px;line-height:16px;">19. Пломба на режущий край зуба . Кол-во= 1</div>
<div style="left:14.7px;top:572px;font-size:13px;color:#20309a;line-height:16px;white-space:pre;letter-spacing:0.056px;line-height:16px;">20. Пломба под искусственную коронку 1/2 . Кол-во= 1</div>
<div style="left:14.7px;top:588px;font-size:13px;color:#20309a;line-height:16px;white-space:pre;letter-spacing:0.056px;line-height:16px;">21. Пломба под искусственную коронку 1/3 . Кол-во= 1</div>
<div style="left:14.7px;top:604px;font-size:13px;color:#20309a;line-height:16px;white-space:pre;letter-spacing:0.056px;line-height:16px;">22. Пломба под искусственную коронку 2/3 . Кол-во= 1</div>
<div style="left:14.7px;top:620px;font-size:13px;color:#20309a;line-height:16px;white-space:pre;letter-spacing:-0.095px;line-height:16px;">23. Пломба-контакт . Кол-во= 1</div>
<div style="left:13px;top:267px;width:1px;height:16px;background:#000030;"></div>
<div style="left:995px;top:265px;width:18px;height:468px;background-image:conic-gradient(#fff 25%,#d4d0c8 0 50%,#fff 0 75%,#d4d0c8 0);background-size:2px 2px;"></div>
<div style="left:995px;top:265px;width:18px;height:18px;background:#d4d0c8;box-shadow:inset 1px 1px 0 #d4d0c8, inset -1px -1px 0 #404040, inset 2px 2px 0 #fff, inset -2px -2px 0 #808080;"><svg style="left:0;top:0" width="18" height="18" viewBox="0 -0.5 18 18"><path d="M5 10 L9 6 L13 10 Z" fill="#fff" transform="translate(1,1)"/><path d="M5 10 L9 6 L13 10 Z" fill="#808080"/></svg></div>
<div style="left:995px;top:715px;width:18px;height:18px;background:#d4d0c8;box-shadow:inset 1px 1px 0 #d4d0c8, inset -1px -1px 0 #404040, inset 2px 2px 0 #fff, inset -2px -2px 0 #808080;"><svg style="left:0;top:0" width="18" height="18" viewBox="0 -0.5 18 18"><path d="M5 7 L13 7 L9 11 Z" fill="#fff" transform="translate(1,1)"/><path d="M5 7 L13 7 L9 11 Z" fill="#808080"/></svg></div>
<div style="left:9px;top:737px;width:50px;height:23px;background:#d4d0c8;box-shadow:inset 1px 1px 0 #fff, inset -1px -1px 0 #404040, inset -2px -2px 0 #808080;"><svg style="left:18px;top:4px" width="16" height="16" viewBox="0 0 16 16"><path d="M1 1.2 L9 1.2 L12 4.2 L12 14.5 L1 14.5 Z" fill="#fff" stroke="#003090" stroke-width="1.3"/><path d="M8.5 1.5 L8.5 4.8 L11.8 4.8" fill="none" stroke="#003090" stroke-width="1.2"/><path d="M7 13.8 L11.4 13.8 L11.4 9" fill="#d8c0f0" stroke="none"/><path d="M3 13.5 L7 13.5" stroke="#a0e0f0" stroke-width="1"/>
<path d="M5 12 L13.5 3.3" stroke="#ffc000" stroke-width="1.6"/><path d="M13 3.8 L14.5 2.2" stroke="#ff8080" stroke-width="1.8"/><path d="M4.3 12.8 L5.3 11.7" stroke="#c08020" stroke-width="1"/></svg>
</div>
<svg style="left:73px;top:740px" width="16" height="16" viewBox="0 0 16 16"><g transform="translate(1,1)"><path d="M1.5 1.5 L14 14" stroke="#fff" stroke-width="1"/><path d="M2.5 13 L13 2.5" stroke="#fff" stroke-width="2"/></g><path d="M1.8 1.8 L9 9" stroke="#808080" stroke-width="3"/><path d="M9 9 L14.8 14.8" stroke="#808080" stroke-width="1.2"/><path d="M2.4 13.2 L9 6.6" stroke="#808080" stroke-width="3.2"/><path d="M9 6.6 L13.8 1.8" stroke="#808080" stroke-width="1.6"/></svg>
<svg style="left:109px;top:744px" width="11" height="12" viewBox="0 0 11 12"><g transform="translate(1,1)"><rect x="0" y="0" width="3" height="10" fill="#fff"/><polygon points="9,0 9,10 3,5" fill="#fff"/></g><rect x="0" y="0" width="3" height="10" fill="#808080"/><polygon points="9,0 9,10 3,5" fill="#808080"/></svg>
<svg style="left:132px;top:744px" width="9" height="12" viewBox="0 0 9 12"><polygon points="8,1 8,11 2,6" fill="#fff"/><polygon points="7,0 7,10 1,5" fill="#808080"/></svg>
<svg style="left:156px;top:744px" width="9" height="12" viewBox="0 0 9 12"><polygon points="2,1 2,11 8,6" fill="#fff"/><polygon points="1,0 1,10 7,5" fill="#808080"/></svg>
<svg style="left:178px;top:744px" width="11" height="12" viewBox="0 0 11 12"><g transform="translate(1,1)"><rect x="6.5" y="0" width="3" height="10" fill="#fff"/><polygon points="0,0 0,10 6.5,5" fill="#fff"/></g><rect x="6.5" y="0" width="3" height="10" fill="#808080"/><polygon points="0,0 0,10 6.5,5" fill="#808080"/></svg>
<svg style="left:197px;top:740px" width="17" height="17" viewBox="0 0 17 17"><path d="M8 13.5 L9.5 16 L10.8 13 Z" fill="#b8e0f8" stroke="#70a0e0" stroke-width="0.8"/><ellipse cx="8.3" cy="7" rx="7.6" ry="6.6" fill="#d8f0fa" stroke="#78a8e8" stroke-width="1"/><ellipse cx="6.5" cy="5" rx="4" ry="3" fill="#fff" opacity="0.8"/>
<circle cx="8.3" cy="3.4" r="1.2" fill="#102880"/><path d="M6.8 5.8 L9.2 5.8 L9.2 10.3 L10.2 10.3 L10.2 11.2 L6.6 11.2 L6.6 10.3 L7.6 10.3 L7.6 6.7 L6.8 6.7 Z" fill="#102880"/></svg>
<svg style="left:220.7px;top:740.7px" width="16" height="16" viewBox="0 0 16 16"><rect x="1.5" y="1.5" width="14" height="13.5" fill="#fff"/><rect x="0.5" y="0.5" width="14" height="13.5" fill="#808080"/></svg>
<svg style="left:254px;top:741px" width="17" height="17" viewBox="0 0 17 17"><g transform="translate(1,1)"><path d="M3 0.5 L8 0.5 L9 2.5 L14 2 L14.5 8 L12.5 9.5 L13 14 L6 14.5 L5 12 L1 12.5 L0.5 7 L2.5 5.5 Z" fill="#fff"/></g><path d="M3 0.5 L8 0.5 L9 2.5 L14 2 L14.5 8 L12.5 9.5 L13 14 L6 14.5 L5 12 L1 12.5 L0.5 7 L2.5 5.5 Z" fill="#808080"/><circle cx="7.5" cy="7.5" r="0.9" fill="#e8e8e8"/></svg>
<svg style="left:285.5px;top:740.5px" width="17" height="16" viewBox="0 0 17 16"><g shape-rendering="crispEdges"><rect x="5" y="1" width="3" height="2" fill="#000"/><rect x="11" y="1" width="3" height="2" fill="#000"/><rect x="6" y="2" width="1" height="1" fill="#fff"/><rect x="12" y="2" width="1" height="1" fill="#fff"/></g>
<path d="M4.5 3 L8.5 3 L9.5 7 L9.5 13.5 L3 13.5 L3 8 Z" fill="#000"/><path d="M10.5 3 L14 3 L16.3 8 L16.3 13.5 L10.5 13.5 Z" fill="#000"/><rect x="9" y="5" width="2" height="4" fill="#000"/><rect x="12.5" y="9" width="1" height="3.5" fill="#fff"/>
<rect x="0.6" y="6.6" width="9" height="8" fill="#fff" stroke="#003090" stroke-width="1.2"/><rect x="1.2" y="7.2" width="7.8" height="1.6" fill="#c0d8f8"/><path d="M2.5 9.5 L3.5 13 L5 10.5 L6.5 13 L7.6 9.5" fill="none" stroke="#003090" stroke-width="1.5"/></svg>
<svg style="left:309px;top:740px" width="16" height="15" viewBox="0 0 16 15"><rect x="1.6" y="1.6" width="14" height="13" fill="#808080"/><rect x="0.7" y="0.7" width="14" height="13" fill="#fff" stroke="#003090" stroke-width="1.4"/><rect x="1.4" y="1.4" width="12.6" height="3.8" fill="#00e020"/><path d="M3.3 5.5 L4.8 12.2 L7.3 7.4 L9.8 12.2 L11.5 5.5" fill="none" stroke="#003090" stroke-width="2.6"/></svg>
<svg style="left:341.5px;top:740.5px" width="17" height="16" viewBox="0 0 17 16"><g shape-rendering="crispEdges"><rect x="5" y="1" width="3" height="2" fill="#000"/><rect x="11" y="1" width="3" height="2" fill="#000"/><rect x="6" y="2" width="1" height="1" fill="#fff"/><rect x="12" y="2" width="1" height="1" fill="#fff"/></g>
<path d="M4.5 3 L8.5 3 L9.5 7 L9.5 13.5 L3 13.5 L3 8 Z" fill="#000"/><path d="M10.5 3 L14 3 L16.3 8 L16.3 13.5 L10.5 13.5 Z" fill="#000"/><rect x="9" y="5" width="2" height="4" fill="#000"/><rect x="12.5" y="9" width="1" height="3.5" fill="#fff"/>
<rect x="0.6" y="6.6" width="9" height="8" fill="#fff" stroke="#003090" stroke-width="1.2"/><rect x="1.2" y="7.2" width="7.8" height="1.6" fill="#c0d8f8"/><path d="M2.5 9.5 L3.5 13 L5 10.5 L6.5 13 L7.6 9.5" fill="none" stroke="#003090" stroke-width="1.5"/></svg>
<svg style="left:365.3px;top:739.5px" width="16" height="16" viewBox="0 0 16 16"><path d="M6.5 1 L14.5 1 L14.5 12 L11 12" fill="#fff" stroke="#003090" stroke-width="1.2"/><path d="M9 1.6 L13.9 1.6 L13.9 8.5 Z" fill="#ffec80"/><rect x="1.6" y="3.6" width="11.4" height="12" fill="#808080"/><rect x="0.7" y="2.7" width="11.4" height="12" fill="#fff" stroke="#003090" stroke-width="1.4"/><path d="M8 3.2 L11.5 3.2 L11.5 9 Z" fill="#ffec80"/><path d="M2.8 6 L4 12 L6.3 8 L8.4 12 L9.8 6" fill="none" stroke="#003090" stroke-width="2.2"/></svg>
<svg style="left:399px;top:740px" width="17" height="16" viewBox="0 0 17 16"><defs><radialGradient id="pgb" cx="0.38" cy="0.3" r="0.75"><stop offset="0" stop-color="#8c8ce6"/><stop offset="0.35" stop-color="#3030a8"/><stop offset="1" stop-color="#06065c"/></radialGradient></defs>
<path d="M1 8 Q1.5 5.6 4.4 5.6 Q6.6 5.6 7.4 8 L6.6 11.5 L5.6 14.4 L3 14.4 L2.6 11 Z" fill="#a8a8ec"/><path d="M3.6 6.6 L4.6 9.6 L5.6 6.6 Z" fill="#fff"/><path d="M1.4 8 L3 11 M2.8 14.4 L4 11 L5.4 14.4" stroke="#2828a0" stroke-width="1.1" fill="none"/>
<circle cx="4.4" cy="3" r="1.9" fill="#3434b0"/><circle cx="4" cy="2.6" r="0.8" fill="#fff"/>
<circle cx="10.9" cy="3.1" r="3.2" fill="url(#pgb)"/><path d="M4.6 15.2 Q4.4 12 7 9.6 Q8.4 6.5 11 6.5 Q14.4 6.5 16 10 Q17.4 13.2 16 15.2 Q10.5 16.6 4.6 15.2 Z" fill="url(#pgb)"/></svg>
<svg style="left:420.5px;top:739.7px" width="17" height="17" viewBox="0 0 17 17"><rect x="0.8" y="0.8" width="15" height="15" fill="#000" stroke="#ffff00" stroke-width="1.5"/><path d="M3 3.5 Q4 2.5 6 3 L8.4 3.8 L11 3 Q13 2.5 14 3.5 L14 7 L13 8 L13.5 13.5 L11.5 13.5 L10.5 10.5 Q8.4 8.5 6.5 10.5 L5.5 13.5 L3.5 13.5 L4 8 L3 7 Z" fill="#f8f8e0"/></svg>
<svg style="left:888px;top:740px" width="17" height="17" viewBox="0 0 17 17"><g shape-rendering="crispEdges"><rect x="10" y="4" width="6" height="6" fill="#706850"/><rect x="8" y="10" width="6" height="6" fill="#706850"/><rect x="2" y="8" width="6" height="6" fill="#706850"/><rect x="3" y="1" width="1" height="6" fill="#0a84ff"/><rect x="4" y="1" width="1" height="6" fill="#8a8cff"/><rect x="5" y="1" width="1" height="6" fill="#0a84ff"/><rect x="6" y="1" width="1" height="6" fill="#8a8cff"/><rect x="7" y="1" width="1" height="6" fill="#0a84ff"/><rect x="8" y="1" width="1" height="6" fill="#8a8cff"/><rect x="9" y="3" width="1" height="6" fill="#0a84ff"/><rect x="10" y="3" width="1" height="6" fill="#8a8cff"/><rect x="11" y="3" width="1" height="6" fill="#0a84ff"/><rect x="12" y="3" width="1" height="6" fill="#8a8cff"/><rect x="13" y="3" width="1" height="6" fill="#0a84ff"/><rect x="14" y="3" width="1" height="6" fill="#8a8cff"/><rect x="1" y="7" width="6" height="1" fill="#4a10ff"/><rect x="1" y="8" width="6" height="1" fill="#000090"/><rect x="1" y="9" width="6" height="1" fill="#4a10ff"/><rect x="1" y="10" width="6" height="1" fill="#000090"/><rect x="1" y="11" width="6" height="1" fill="#4a10ff"/><rect x="1" y="12" width="6" height="1" fill="#000090"/><rect x="7" y="9" width="6" height="1" fill="#4a10ff"/><rect x="7" y="10" width="6" height="1" fill="#000090"/><rect x="7" y="11" width="6" height="1" fill="#4a10ff"/><rect x="7" y="12" width="6" height="1" fill="#000090"/><rect x="7" y="13" width="6" height="1" fill="#4a10ff"/><rect x="7" y="14" width="6" height="1" fill="#000090"/></g></svg>
<div style="left:947px;top:737px;width:23px;height:23px;background:#ebe9e4;box-shadow:inset 1px 1px 0 #808080, inset 2px 2px 0 #404040, inset -1px -1px 0 #fff;"></div>
<svg style="left:947px;top:737px" width="70" height="23" viewBox="947 737 70 23"><rect x="949.5" y="739.5" width="18" height="18" fill="none" stroke="#000" stroke-width="1" stroke-dasharray="1 1"/><defs><linearGradient id="sqg" x1="0" y1="0" x2="1" y2="0"><stop offset="0" stop-color="#f4f8f0"/><stop offset="0.5" stop-color="#b8c8b8"/><stop offset="0.75" stop-color="#c8c8c0"/><stop offset="1" stop-color="#b0e0c0"/></linearGradient></defs><rect x="951.75" y="741.75" width="13.5" height="13.5" fill="url(#sqg)" stroke="#000" stroke-width="1.35"/><rect x="975" y="742" width="14" height="14" fill="#808080" opacity="0.7"/><rect x="973.75" y="740.75" width="13.5" height="13.5" fill="#c8c8c0" stroke="#000" stroke-width="1.35"/><rect x="974.5" y="741.5" width="12" height="5" fill="#fff"/><rect x="974" y="746.3" width="13" height="1.4" fill="#000"/><rect x="998" y="742" width="14" height="14" fill="#808080" opacity="0.7"/><rect x="996.75" y="740.75" width="13.5" height="13.5" fill="#c8c8c0" stroke="#000" stroke-width="1.35"/></svg><svg style="left:830px;top:580px" width="194" height="188" viewBox="830 580 194 188">
<defs>
<radialGradient id="rg" cx="0.5" cy="0.5" r="0.5">
<stop offset="0" stop-color="#fff"/><stop offset="0.76" stop-color="#fff"/><stop offset="0.80" stop-color="#fff2e4"/><stop offset="0.832" stop-color="#ffd2d2"/><stop offset="0.861" stop-color="#ffb6b6"/><stop offset="0.905" stop-color="#ff9494"/><stop offset="0.949" stop-color="#ff6a6a"/><stop offset="0.972" stop-color="#ff1c1c"/><stop offset="1" stop-color="#ff0000"/>
</radialGradient>
<linearGradient id="tg" x1="938" y1="724" x2="955" y2="716" gradientUnits="userSpaceOnUse"><stop offset="0" stop-color="#ff0000"/><stop offset="0.12" stop-color="#ff2828"/><stop offset="0.45" stop-color="#ff7070"/><stop offset="0.85" stop-color="#ff4040"/><stop offset="1" stop-color="#ff0000"/></linearGradient>
<filter id="bl" x="-20%" y="-20%" width="140%" height="140%"><feGaussianBlur stdDeviation="2.1"/></filter>
</defs>
<g filter="url(#bl)" opacity="0.66" transform="translate(5,5)"><ellipse cx="913" cy="655.5" rx="68.3" ry="65.5" fill="#404040"/><path d="M936.5 714 L959.8 753.8 L948.5 707 Z" fill="#404040"/></g>
<ellipse cx="913" cy="655.5" rx="68.3" ry="65.5" fill="url(#rg)"/>
<path d="M937.6 712 L959.8 753.8 L947.6 707.5 Z" fill="#ff7878"/>
<path d="M936.6 715.6 L959.8 753.8 L948.6 709.6" fill="none" stroke="#ff0808" stroke-width="1.7" stroke-linejoin="miter" stroke-miterlimit="10"/>
<path d="M950 737 L959.8 753.8 L955 737 Z" fill="#ff1010"/>
</svg>
<div style="left:863.8px;top:623px;font-size:13px;color:#000;line-height:16px;white-space:pre;font-weight:bold;letter-spacing:0.141px;line-height:16px;">Предваритель</div>
<div style="left:864.9px;top:639px;font-size:13px;color:#000;line-height:16px;white-space:pre;font-weight:bold;letter-spacing:0.014px;line-height:16px;">ный просмотр</div>
<div style="left:891.7px;top:655px;font-size:13px;color:#000;line-height:16px;white-space:pre;font-weight:bold;letter-spacing:0.304px;line-height:16px;">снова</div>
<div style="left:879.0px;top:671px;font-size:13px;color:#000;line-height:16px;white-space:pre;font-weight:bold;letter-spacing:0.33px;line-height:16px;">отключен</div>
</body></html>
